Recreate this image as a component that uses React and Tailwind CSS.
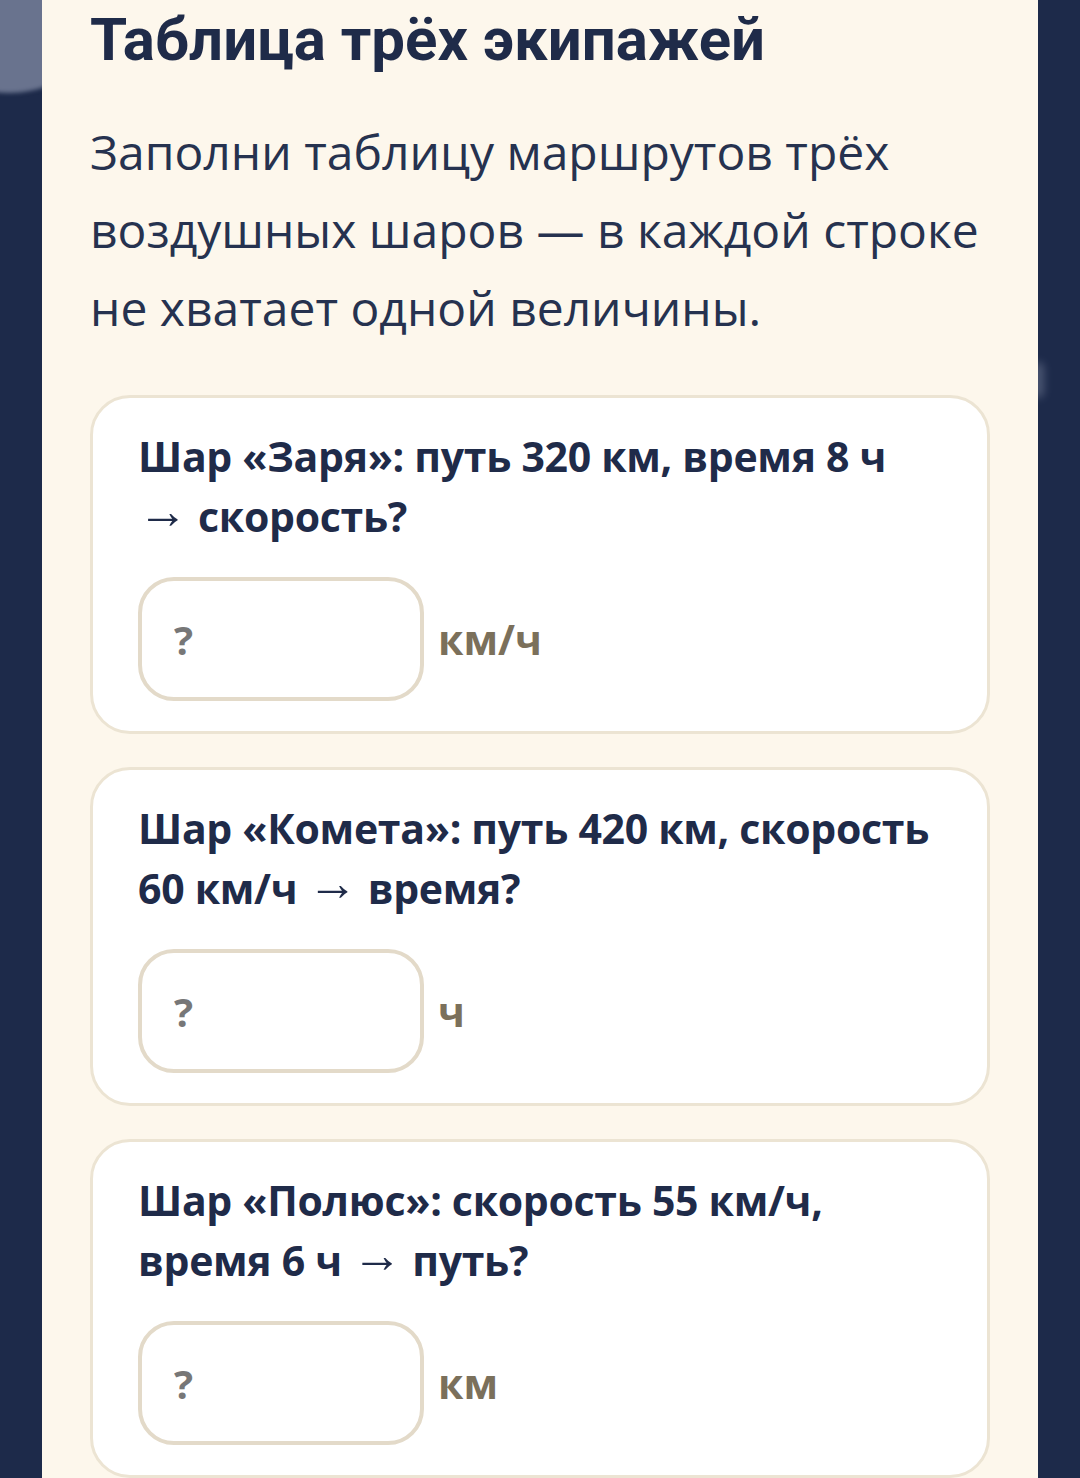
import React from "react";

const rows = [
  { id: "zarya", lines: ["Шар «Заря»: путь 320 км, время 8 ч", null, "скорость?"], unit: "км/ч" },
  { id: "kometa", lines: ["Шар «Комета»: путь 420 км, скорость", "60 км/ч", "время?"], unit: "ч" },
  { id: "polus", lines: ["Шар «Полюс»: скорость 55 км/ч,", "время 6 ч", "путь?"], unit: "км" },
];

const Arrow = () => (
  <span className="inline-block leading-none font-['Liberation_Sans',sans-serif] text-[50px] font-normal relative top-[-4px]">→</span>
);

const RouteCard = ({ row }) => {
  const [first, before, after] = row.lines;
  return (
    <div className="bg-white border-[3px] border-[#ece4d3] rounded-[40px] pt-[28px] pb-[30px] px-[45px]">
      <p className="font-['Open_Sans',sans-serif] font-bold text-[41px] leading-[60px] text-[#1f2b49] tracking-[-0.3px]">
        <span className="block whitespace-nowrap h-[60px]">{first}</span>
        <span className="block whitespace-nowrap h-[60px]">
          {before && <span>{before} </span>}
          <Arrow />
          <span> {after}</span>
        </span>
      </p>
      <div className="flex items-center gap-[14px] mt-[31px]">
        <input
          type="text"
          placeholder="?"
          className="w-[286px] h-[124px] rounded-[36px] border-[4px] border-[#e3dac9] bg-white px-[32px] font-['Open_Sans',sans-serif] font-bold text-[40px] text-[#1f2b49] placeholder:text-[#777777] outline-none"
        />
        <span className="font-['Open_Sans',sans-serif] font-bold text-[41px] leading-[60px] text-[#7b705b]">{row.unit}</span>
      </div>
    </div>
  );
};

export default function App() {
  return (
    <div className="relative w-[1080px] h-[1478px] overflow-hidden bg-[#1d2a4a]">
      {/* blurred decoration peeking from behind the panel */}
      <div className="absolute -left-[90px] -top-[115px] w-[200px] h-[208px] rounded-full bg-[#69738e] blur-[2px]" />
      <div className="absolute left-[1032px] top-[362px] w-[12px] h-[36px] rounded-full bg-[#8d96ad] blur-[4px] opacity-40" />

      <div className="relative mx-[42px] h-full bg-[#fdf7ec] px-[48px]">
        <h1 className="pt-[4px] font-['Roboto',sans-serif] font-bold text-[60px] leading-[72px] text-[#1f2b49] whitespace-nowrap">
          Таблица трёх экипажей
        </h1>
        <p className="mt-[37px] font-['Open_Sans',sans-serif] text-[48px] leading-[78px] text-[#26324f]">
          <span className="block whitespace-nowrap">Заполни таблицу маршрутов трёх</span>
          <span className="block whitespace-nowrap">воздушных шаров — в каждой строке</span>
          <span className="block whitespace-nowrap">не хватает одной величины.</span>
        </p>
        <div className="mt-[48px] flex flex-col gap-[33px]">
          {rows.map((row) => (
            <RouteCard key={row.id} row={row} />
          ))}
        </div>
      </div>
    </div>
  );
}
